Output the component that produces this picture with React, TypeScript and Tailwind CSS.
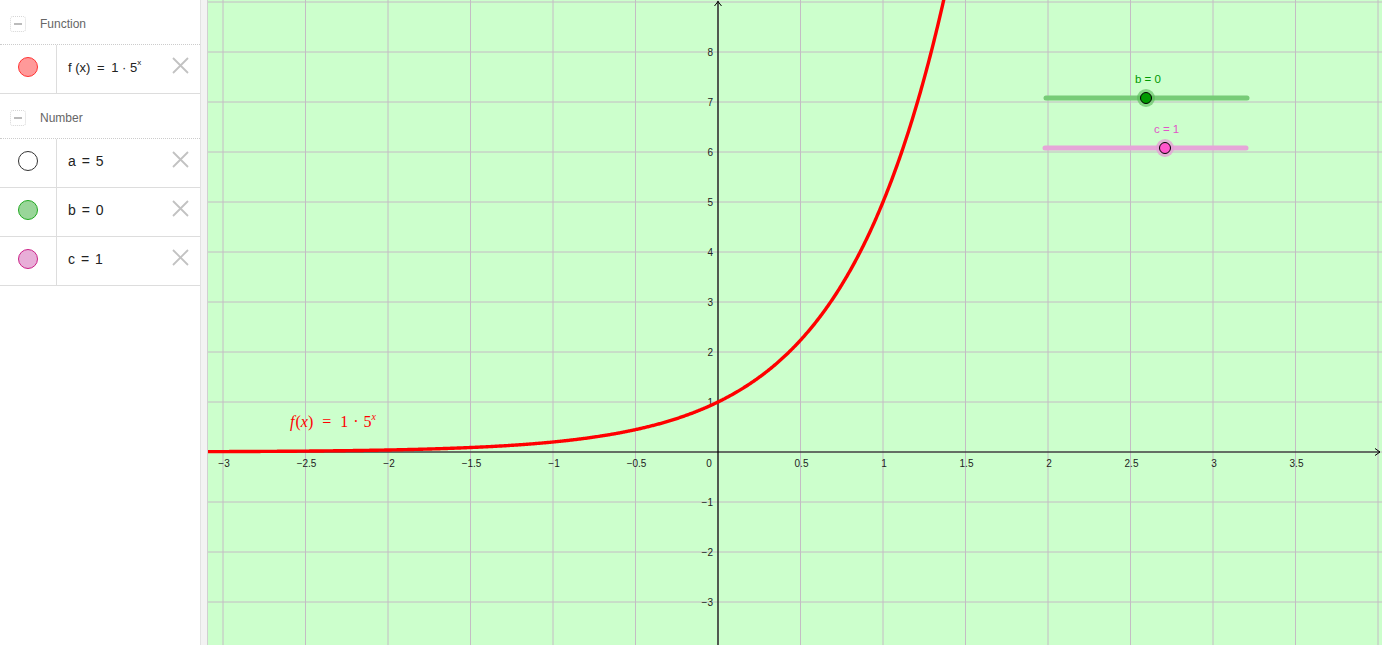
const ox = 718
const oy = 452
const sx = 165
const sy = 50
const px = (x: number) => ox + sx * x
const py = (y: number) => oy - sy * y

function curvePath() {
  const pts: string[] = []
  for (let x = -3.1; x <= 1.375; x += 0.005) {
    pts.push(`${px(x).toFixed(2)},${py(Math.pow(5, x)).toFixed(2)}`)
  }
  return 'M' + pts.join(' L')
}

const xTicks = [-3, -2.5, -2, -1.5, -1, -0.5, 0.5, 1, 1.5, 2, 2.5, 3, 3.5]
const yTicks = [8, 7, 6, 5, 4, 3, 2, 1, -1, -2, -3]

const fmt = (v: number) => (v < 0 ? '\u2212' + String(-v) : String(v))

function Graph() {
  const vLines: number[] = []
  for (let k = -6; k <= 8; k++) vLines.push(ox + 82.5 * k)
  const hLines: number[] = []
  for (let k = -3; k <= 9; k++) hLines.push(py(k))

  return (
    <svg viewBox="208 0 1174 645" className="w-full h-full block" style={{ fontFamily: '"Liberation Sans", Arial, sans-serif' }}>
      <rect x={208} y={0} width={1174} height={645} fill="#ccffcc" />
      {vLines.map((x) => (
        <line key={'v' + x} x1={x} y1={0} x2={x} y2={645} stroke="#c4bcc4" strokeWidth={1} />
      ))}
      {hLines.map((y) => (
        <line key={'h' + y} x1={208} y1={y} x2={1382} y2={y} stroke="#c4bcc4" strokeWidth={1} />
      ))}

      {/* axes */}
      <line x1={208} y1={oy} x2={1380} y2={oy} stroke="#000" strokeWidth={1.2} />
      <path d="M1375,448.5 L1380,452 L1375,455.5" fill="none" stroke="#000" strokeWidth={1} />
      <line x1={ox} y1={1} x2={ox} y2={645} stroke="#000" strokeWidth={1.2} />
      <path d="M714.5,6 L718,1.5 L721.5,6" fill="none" stroke="#000" strokeWidth={1} />

      {xTicks.map((v) => (
        <text key={'xt' + v} x={px(v) + 1} y={467} fontSize={10} textAnchor="middle" fill="#222">
          {fmt(v)}
        </text>
      ))}
      <text x={709} y={467} fontSize={10} textAnchor="middle" fill="#222">0</text>
      {yTicks.map((v) => (
        <text key={'yt' + v} x={713} y={py(v) + 3.5} fontSize={10} textAnchor="end" fill="#222">
          {fmt(v)}
        </text>
      ))}

      {/* curve */}
      <path d={curvePath()} fill="none" stroke="#ff0000" strokeWidth={3.4} strokeLinejoin="round" />

      <text x={290} y={427} fontSize={16} fill="#ff0000" style={{ fontFamily: '"Liberation Serif", "Times New Roman", serif' }}>
        <tspan fontStyle="italic">f</tspan>
        <tspan dx={1}>(</tspan>
        <tspan fontStyle="italic">x</tspan>
        <tspan>)</tspan>
        <tspan dx={9}>=</tspan>
        <tspan dx={9}>1</tspan>
        <tspan dx={5}>·</tspan>
        <tspan dx={5}>5</tspan>
        <tspan dy={-7} fontSize={10} fontStyle="italic">x</tspan>
      </text>

      {/* slider b */}
      <line x1={1046} y1={98} x2={1247} y2={98} stroke="#77cc77" strokeWidth={5} strokeLinecap="round" />
      <circle cx={1146} cy={98} r={9} fill="#55bb55" fillOpacity={0.6} />
      <circle cx={1146} cy={98} r={5.5} fill="#009900" stroke="#000" strokeWidth={1} />
      <text x={1135} y={83} fontSize={11.5} fill="#009900">b = 0</text>

      {/* slider c */}
      <line x1={1045} y1={148} x2={1246} y2={148} stroke="#e6a6d8" strokeWidth={5} strokeLinecap="round" />
      <circle cx={1165} cy={148} r={9} fill="#e6a0d6" fillOpacity={0.8} />
      <circle cx={1165} cy={148} r={5.5} fill="#ff55cc" stroke="#000" strokeWidth={1} />
      <text x={1154} y={133} fontSize={11.5} fill="#e055c8">c = 1</text>
    </svg>
  )
}

function GroupHeader({ label }: { label: string }) {
  return (
    <div className="h-[45px] flex items-center pt-[3px] border-b border-dotted border-[#cccccc]">
      <div className="ml-[10px] w-[16px] h-[16px] rounded-[3px] border border-dotted border-[#d6d6d6] flex items-center justify-center">
        <div className="w-[8px] h-[2px] bg-[#bbbbbb]" />
      </div>
      <span className="ml-[14px] text-[12px] text-[#666666]">{label}</span>
    </div>
  )
}

function Row({ dot, children }: { dot: string; children: React.ReactNode }) {
  return (
    <div className="h-[49px] flex border-b border-[#dddddd]">
      <div className="w-[57px] border-r border-[#dddddd] flex items-center justify-center pb-[4px]">
        <div className={`w-[20px] h-[20px] rounded-full border ${dot}`} />
      </div>
      <div className="flex-1 flex items-center pb-[3px] pl-[11px] text-[14px] text-[#222222]">{children}</div>
      <div className="w-[28px] flex items-center pb-[7px]">
        <svg width="17" height="17" viewBox="0 0 17 17">
          <path d="M1,1 L16,16 M16,1 L1,16" stroke="#c2c2c2" strokeWidth={1.8} />
        </svg>
      </div>
    </div>
  )
}

export default function App() {
  return (
    <div className="h-[645px] w-full flex bg-white overflow-hidden" style={{ fontFamily: '"Liberation Sans", Arial, sans-serif' }}>
      <div className="w-[200px] shrink-0 flex flex-col">
        <GroupHeader label="Function" />
        <Row dot="bg-[#ff9999] border-[#ff3333]">
          <span className="text-[13px]">
            f (x) <span className="mx-[3px]">=</span> 1 · 5<span className="text-[8px] align-top relative -top-[1px]">x</span>
          </span>
        </Row>
        <GroupHeader label="Number" />
        <Row dot="bg-white border-[#333333]">
          <span>a <span className="mx-[2px]">=</span> 5</span>
        </Row>
        <Row dot="bg-[#99d699] border-[#22aa22]">
          <span>b <span className="mx-[2px]">=</span> 0</span>
        </Row>
        <Row dot="bg-[#e8aed8] border-[#cc2288]">
          <span>c <span className="mx-[2px]">=</span> 1</span>
        </Row>
      </div>
      <div className="w-[8px] shrink-0 bg-[#f3f3f3] border-l border-[#e2e2e2] border-r border-r-[#d0d0d0]" />
      <div className="flex-1 h-full">
        <Graph />
      </div>
    </div>
  )
}
